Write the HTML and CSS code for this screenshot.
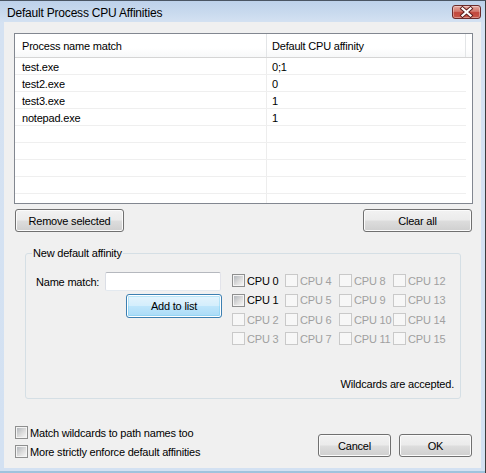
FILE: index.html
```html
<!DOCTYPE html>
<html>
<head>
<meta charset="utf-8">
<title>Default Process CPU Affinities</title>
<link rel="stylesheet" href="styles.css">
</head>
<body>
<div class="window">
  <div class="titlebar">
    <span class="title">Default Process CPU Affinities</span>
    <div class="close">
      <svg width="27" height="12" viewBox="0 0 27 12">
        <path d="M9.5 2.5 L17.5 9.5 M17.5 2.5 L9.5 9.5" stroke="#5a1c1c" stroke-width="4" stroke-linecap="square" fill="none"/>
        <path d="M9.5 2.5 L17.5 9.5 M17.5 2.5 L9.5 9.5" stroke="#ffffff" stroke-width="2.2" stroke-linecap="square" fill="none"/>
      </svg>
    </div>
  </div>
  <div class="client">
    <div class="list">
      <div class="list-head">
        <div class="hc c1">Process name match</div>
        <div class="hc c2">Default CPU affinity</div>
        <div class="hc c3"></div>
      </div>
      <div class="list-body">
        <div class="row"><span class="cell c1">test.exe</span><span class="cell c2">0;1</span></div>
        <div class="row"><span class="cell c1">test2.exe</span><span class="cell c2">0</span></div>
        <div class="row"><span class="cell c1">test3.exe</span><span class="cell c2">1</span></div>
        <div class="row"><span class="cell c1">notepad.exe</span><span class="cell c2">1</span></div>
        <div class="row"></div>
        <div class="row"></div>
        <div class="row"></div>
        <div class="row"></div>
      </div>
    </div>
    <div class="list-buttons">
      <button class="btn w109">Remove selected</button>
      <button class="btn w109">Clear all</button>
    </div>
    <div class="group">
      <span class="legend">New default affinity</span>
      <div class="group-top">
        <div class="left-col">
          <div class="name-row"><span class="lbl">Name match:</span><span class="textbox"></span></div>
          <button class="btn default add">Add to list</button>
        </div>
        <div class="cpu-grid">
          <label class="cpu"><span class="cb"></span>CPU 0</label>
          <label class="cpu"><span class="cb"></span>CPU 1</label>
          <label class="cpu off"><span class="cb"></span>CPU 2</label>
          <label class="cpu off"><span class="cb"></span>CPU 3</label>
          <label class="cpu off"><span class="cb"></span>CPU 4</label>
          <label class="cpu off"><span class="cb"></span>CPU 5</label>
          <label class="cpu off"><span class="cb"></span>CPU 6</label>
          <label class="cpu off"><span class="cb"></span>CPU 7</label>
          <label class="cpu off"><span class="cb"></span>CPU 8</label>
          <label class="cpu off"><span class="cb"></span>CPU 9</label>
          <label class="cpu off"><span class="cb"></span>CPU 10</label>
          <label class="cpu off"><span class="cb"></span>CPU 11</label>
          <label class="cpu off"><span class="cb"></span>CPU 12</label>
          <label class="cpu off"><span class="cb"></span>CPU 13</label>
          <label class="cpu off"><span class="cb"></span>CPU 14</label>
          <label class="cpu off"><span class="cb"></span>CPU 15</label>
        </div>
      </div>
      <div class="hint">Wildcards are accepted.</div>
    </div>
    <div class="bottom">
      <div class="opts">
        <label class="opt"><span class="cb"></span>Match wildcards to path names too</label>
        <label class="opt"><span class="cb"></span>More strictly enforce default affinities</label>
      </div>
      <div class="dlg-buttons">
        <button class="btn w73">Cancel</button>
        <button class="btn w73">OK</button>
      </div>
    </div>
  </div>
</div>
</body>
</html>
```
FILE: styles.css
```css
html, body {
  margin: 0;
  padding: 0;
  background: #1e1e1e;
}
body {
  font-family: "Liberation Sans", Arial, sans-serif;
  font-size: 11px;
  letter-spacing: -0.2px;
  color: #000;
}
.window {
  width: 486px;
  height: 473px;
  box-sizing: border-box;
  border-top: 1px solid #4a5563;
  border-right: 1px solid #3c3c3c;
  padding: 0 4px 5px 4px;
  background: linear-gradient(#bdd1ea 0px, #c9daee 12px, #d5e2f2 22px, #d3e1f2 100%);
  display: flex;
  flex-direction: column;
  box-shadow: inset 0 -2px 0 #9fc3dd;
}
.titlebar {
  height: 21px;
  display: flex;
  justify-content: space-between;
  align-items: flex-start;
}
.title {
  font-size: 12px;
  margin-left: 3px;
  margin-top: 5px;
  line-height: 15px;
}
.close {
  width: 29px;
  height: 14px;
  box-sizing: border-box;
  margin-top: 4px;
  border: 1px solid #6b2b2b;
  border-radius: 3px;
  background: linear-gradient(#e6a9a0 0%, #d2776c 45%, #c2473c 55%, #c9584a 100%);
  box-shadow: inset 0 0 0 1px rgba(255,255,255,0.35);
  display: flex;
}
.client {
  flex: 1;
  background: #f0f0f0;
  display: flex;
  flex-direction: column;
}
.list {
  margin: 11px 0 0 10px;
  width: 459px;
  height: 171px;
  box-sizing: border-box;
  border: 1px solid #828790;
  background: #fff;
  display: flex;
  flex-direction: column;
}
.list-head {
  height: 24px;
  box-sizing: border-box;
  border-bottom: 1px solid #d5d5d5;
  display: flex;
  background: linear-gradient(#ffffff, #ffffff 60%, #f7f8f9);
}
.hc {
  box-sizing: border-box;
  padding-top: 2px;
  line-height: 21px;
  border-right: 1px solid #e3e5e7;
}
.hc.c1 { width: 252px; padding-left: 7px; }
.hc.c2 { width: 199px; padding-left: 5px; }
.hc.c3 { flex: 1; border-right: none; }
.list-body {
  flex: 1;
  width: 451px;
  background: linear-gradient(to right, transparent 251px, #ededed 251px, #ededed 252px, transparent 252px);
}
.row {
  height: 17px;
  box-sizing: border-box;
  border-bottom: 1px solid #efefef;
  display: flex;
  padding-top: 3px;
  line-height: 13px;
}
.cell.c1 { width: 252px; box-sizing: border-box; padding-left: 7px; }
.cell.c2 { padding-left: 5px; }
.btn {
  font: inherit;
  letter-spacing: inherit;
  color: #000;
  padding: 0;
  height: 23px;
  box-sizing: border-box;
  border: 1px solid #707070;
  border-radius: 3px;
  background: linear-gradient(#f2f2f2 0%, #ebebeb 48%, #dddddd 52%, #cfcfcf 100%);
  box-shadow: inset 0 0 0 1px #fbfbfb;
  display: flex;
  align-items: center;
  justify-content: center;
}
.btn.default {
  border-color: #3c7fb1;
  background: linear-gradient(#e5f4fc 0%, #d4eefc 48%, #bde5fb 52%, #a9daf6 100%);
  box-shadow: inset 0 0 0 1px #fff, inset 0 0 0 2px rgba(100,200,240,0.35);
}
.w109 { width: 109px; }
.w73 { width: 73px; }
.list-buttons {
  margin: 5px 0 0 11px;
  width: 457px;
  display: flex;
  justify-content: space-between;
}
.group {
  position: relative;
  margin: 21px 0 0 21px;
  width: 436px;
  box-sizing: border-box;
  border: 1px solid #d5dfe5;
  border-radius: 3px;
  padding: 17px 6px 7px 10px;
}
.legend {
  position: absolute;
  left: 6px;
  top: -8px;
  line-height: 14px;
  padding: 0 1px;
  background: #f0f0f0;
}
.group-top {
  display: flex;
  align-items: flex-start;
}
.left-col {
  width: 186px;
  margin-top: 1px;
  display: flex;
  flex-direction: column;
}
.name-row {
  height: 19px;
  display: flex;
  align-items: center;
}
.lbl { width: 69px; }
.textbox {
  width: 116px;
  height: 19px;
  box-sizing: border-box;
  border: 1px solid;
  border-color: #b5b8be #e2e3ea #e3e9ef #dbdee5;
  border-radius: 2px;
  background: #fff;
}
.add {
  width: 96px;
  height: 24px;
  margin: 3px 0 0 90px;
}
.cpu-grid {
  margin-left: 10px;
  display: grid;
  grid-template-columns: 53px 54px 54px 54px;
  grid-template-rows: 19px 20px 19px 19px;
  grid-auto-flow: column;
}
.cpu, .opt {
  display: flex;
  align-items: center;
  gap: 2px;
  white-space: nowrap;
}
.cb {
  position: relative;
  width: 13px;
  height: 13px;
  box-sizing: border-box;
  border: 1px solid #8e8f8f;
  background: #f4f4f4;
  flex: none;
}
.cb::after {
  content: "";
  position: absolute;
  left: 1px;
  top: 1px;
  right: 1px;
  bottom: 1px;
  background: linear-gradient(135deg, #b4b8bd 0%, #dcdcdc 55%, #f4f4f4 100%);
}
.cpu.off { color: #a0a0a0; }
.cpu.off .cb { border-color: #c9c9c9; background: #f7f7f7; }
.cpu.off .cb::after { background: #f7f7f7; }
.hint {
  margin-top: 29px;
  line-height: 14px;
  text-align: right;
}
.bottom {
  margin-top: 24px;
  padding-left: 11px;
  display: flex;
  align-items: flex-start;
}
.opts {
  display: flex;
  flex-direction: column;
}
.opt { height: 19px; }
.dlg-buttons {
  margin: 11px 9px 0 auto;
  display: flex;
  gap: 8px;
}
```
